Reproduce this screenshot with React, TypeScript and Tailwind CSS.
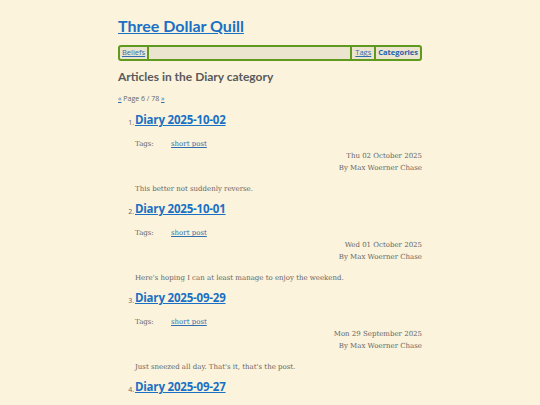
import React from 'react';

type Post = {
  n: number;
  title: string;
  date: string;
  summary: string;
};

const posts: Post[] = [
  { n: 1, title: 'Diary 2025-10-02', date: 'Thu 02 October 2025', summary: 'This better not suddenly reverse.' },
  { n: 2, title: 'Diary 2025-10-01', date: 'Wed 01 October 2025', summary: "Here's hoping I can at least manage to enjoy the weekend." },
  { n: 3, title: 'Diary 2025-09-29', date: 'Mon 29 September 2025', summary: "Just sneezed all day. That's it, that's the post." },
  { n: 4, title: 'Diary 2025-09-27', date: 'Sat 27 September 2025', summary: 'More of the same.' },
];

const head = { fontFamily: '"Open Sans", "Noto Sans", sans-serif' };
const brand = { fontFamily: 'Lato, "Open Sans", sans-serif' };
const body = { fontFamily: '"DejaVu Serif", "Liberation Serif", serif' };

const PostItem: React.FC<{ post: Post }> = ({ post }) => (
  <li className="flex">
    <span className="w-[17px] shrink-0 pt-[7px] text-right pr-[1px] text-[7px] text-[#666]" style={head}>
      {post.n}.
    </span>
    <div className="flex-1">
      <a href="#" className="block text-[11.5px] font-bold leading-[18px] tracking-[-0.2px] text-[#1a70c4] underline" style={head}>
        {post.title}
      </a>
      <div className="mt-[9px] flex text-[7px] leading-[12px] text-[#666]" style={body}>
        <span className="w-[36px]">Tags:</span>
        <a href="#" className="text-[#2f6fb0] underline">short post</a>
      </div>
      <div className="text-right text-[7px] leading-[12px] text-[#666]" style={body}>
        <p>{post.date}</p>
        <p>By Max Woerner Chase</p>
      </div>
      <p className="mt-[9px] text-[7px] leading-[12px] text-[#666]" style={body}>{post.summary}</p>
    </div>
  </li>
);

export default function App() {
  return (
    <div className="h-[405px] overflow-hidden bg-[#fbf3dc]">
      <div className="mx-auto w-[304px] pt-[12px]">
        <a href="#" className="block text-[16px] font-bold leading-[28px] text-[#1a70c4] underline" style={brand}>
          Three Dollar Quill
        </a>
        <nav
          className="mt-[5px] flex h-[16px] items-stretch rounded-[3px] border-2 border-[#5f9a1e] bg-[#ebe4cf] text-[7.5px]"
          style={head}
        >
          <a href="#" className="flex items-center px-[2px] text-[#2f6fb0] underline">Beliefs</a>
          <span className="flex-1 border-x-2 border-[#5f9a1e]" />
          <a href="#" className="flex items-center px-[3px] text-[#2f6fb0] underline">Tags</a>
          <a href="#" className="flex items-center border-l-2 border-[#5f9a1e] px-[2px] font-bold text-[#1e5fa8]">Categories</a>
        </nav>
        <h2 className="mt-[7px] text-[12px] font-bold leading-[18px] text-[#5a5a5a]" style={brand}>
          Articles in the Diary category
        </h2>
        <p className="mt-[8px] text-[7px] leading-[10px] text-[#666]" style={head}>
          <a href="#" className="text-[#2f6fb0] underline">«</a> Page 6 / 78{' '}
          <a href="#" className="text-[#2f6fb0] underline">»</a>
        </p>
        <ol className="mt-[7px] flex flex-col gap-[5px]">
          {posts.map(p => (
            <PostItem key={p.n} post={p} />
          ))}
        </ol>
      </div>
    </div>
  );
}
